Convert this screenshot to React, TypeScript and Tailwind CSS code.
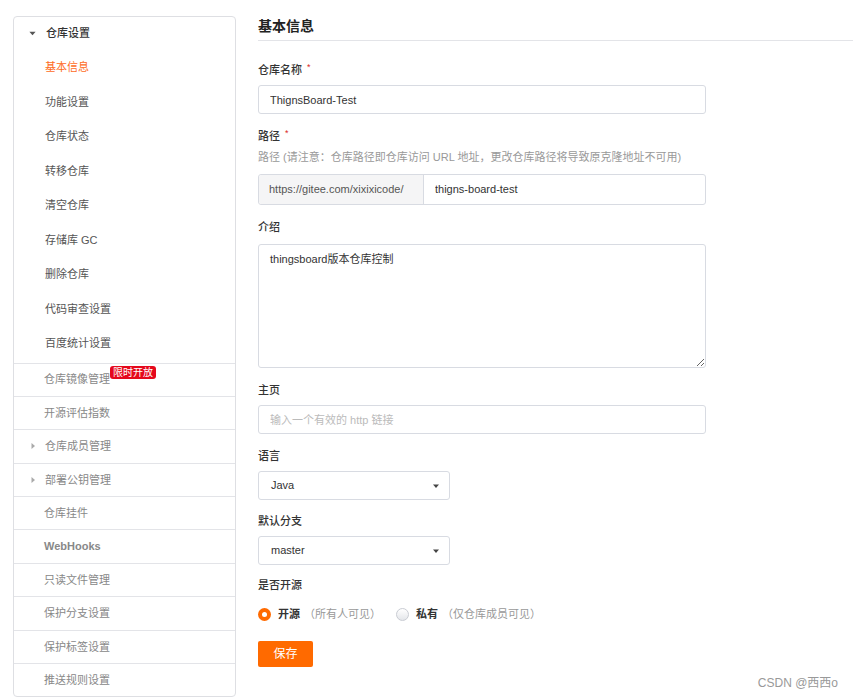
import React from 'react';

const font = { fontFamily: '"Liberation Sans", "Noto Sans CJK SC", sans-serif' };

const groupItems = ['基本信息', '功能设置', '仓库状态', '转移仓库', '清空仓库', '存储库 GC', '删除仓库', '代码审查设置', '百度统计设置'];

const rows: { label: string; caret?: boolean; badge?: string; bold?: boolean }[] = [
  { label: '仓库镜像管理', badge: '限时开放' },
  { label: '开源评估指数' },
  { label: '仓库成员管理', caret: true },
  { label: '部署公钥管理', caret: true },
  { label: '仓库挂件' },
  { label: 'WebHooks', bold: true },
  { label: '只读文件管理' },
  { label: '保护分支设置' },
  { label: '保护标签设置' },
  { label: '推送规则设置' },
];

const Label: React.FC<{ text: string; required?: boolean; className?: string }> = ({ text, required, className }) => (
  <div className={`h-[18px] leading-[18px] text-[11px] font-medium text-[#333] ${className ?? ''}`}>
    {text}
    {required && <span className="text-[#db2828] ml-[5px] relative top-[-4px] text-[9px]">*</span>}
  </div>
);

const Caret = () => (
  <svg width="8" height="8" viewBox="0 0 8 8" className="text-[#444]">
    <path d="M1 2.5h6L4 6z" fill="currentColor" />
  </svg>
);

const Sidebar = () => (
  <div className="w-[223px] shrink-0 border border-[#dedfe3] rounded-[4px] text-[11px]">
    <div className="pb-[2px]">
      <div className="h-[33px] flex items-center pl-[15px]">
        <span className="w-[17px] flex text-[#555]">
          <svg width="7" height="7" viewBox="0 0 8 8">
            <path d="M0.5 2h7L4 6z" fill="#555" />
          </svg>
        </span>
        <span className="font-medium text-[#333]">仓库设置</span>
      </div>
      {groupItems.map((item, i) => (
        <div
          key={item}
          className={`h-[34.5px] flex items-center pl-[31px] ${i === 0 ? 'text-[#fe6b1c]' : 'text-[#555]'}`}
        >
          {item}
        </div>
      ))}
    </div>
    {rows.map((r) => (
      <div
        key={r.label}
        className={`h-[33.4px] border-t border-[#e3e4e8] flex items-center ${r.caret ? 'pl-[16px]' : 'pl-[30px]'} text-[#888]`}
      >
        {r.caret && (
          <span className="w-[15px] flex">
            <svg width="6" height="8" viewBox="0 0 6 8">
              <path d="M1.5 1v6L5 4z" fill="#aaa" />
            </svg>
          </span>
        )}
        <span className={r.bold ? 'font-semibold' : ''}>{r.label}</span>
        {r.badge && (
          <span className="relative top-[-7px] bg-[#e5081c] text-white text-[10px] leading-[13px] px-[3px] rounded-[3px]">
            {r.badge}
          </span>
        )}
      </div>
    ))}
  </div>
);

const Select: React.FC<{ value: string; className?: string }> = ({ value, className }) => (
  <div className={`w-[192px] h-[29px] border border-[#d8dbe2] rounded-[3px] flex items-center justify-between pl-[12px] pr-[9px] text-[11px] text-[#333] ${className ?? ''}`}>
    <span>{value}</span>
    <Caret />
  </div>
);

const Radio: React.FC<{ checked?: boolean }> = ({ checked }) =>
  checked ? (
    <span className="w-[13px] h-[13px] rounded-full bg-[#ff6a00] flex items-center justify-center">
      <span className="w-[5px] h-[5px] rounded-full bg-white" />
    </span>
  ) : (
    <span className="w-[13px] h-[13px] rounded-full border border-[#c9ccd3] bg-gradient-to-b from-white to-[#e4e6ea]" />
  );

export default function App() {
  return (
    <div className="relative min-h-[699px] bg-white" style={font}>
      <div className="flex pt-[16px] pl-[13px]">
        <Sidebar />
        <div className="flex-1 ml-[22px] flex flex-col">
          <div className="h-[25px] leading-[20px] text-[14px] font-semibold text-[#222] border-b border-[#e3e4e8]">
            基本信息
          </div>
          <div className="w-[448px] flex flex-col">
            <Label text="仓库名称" required className="mt-[20px]" />
            <input
              readOnly
              value="ThignsBoard-Test"
              className="mt-[6px] h-[29px] border border-[#d8dbe2] rounded-[3px] px-[11px] text-[11px] text-[#333] outline-none"
            />
            <Label text="路径" required className="mt-[13px]" />
            <div className="mt-[3px] h-[18px] leading-[18px] text-[11px] text-[#999]">
              路径 (请注意：仓库路径即仓库访问 URL 地址，更改仓库路径将导致原克隆地址不可用)
            </div>
            <div className="mt-[8px] h-[31px] border border-[#d8dbe2] rounded-[3px] flex text-[11px]">
              <div className="w-[165px] bg-[#f5f5f6] border-r border-[#d8dbe2] flex items-center pl-[10px] text-[#555] rounded-l-[3px]">
                https://gitee.com/xixixicode/
              </div>
              <input readOnly value="thigns-board-test" className="flex-1 px-[11px] text-[#333] outline-none" />
            </div>
            <Label text="介绍" className="mt-[13px]" />
            <textarea
              readOnly
              defaultValue="thingsboard版本仓库控制"
              className="mt-[8px] h-[124px] border border-[#d8dbe2] rounded-[3px] px-[11px] py-[7px] text-[11px] leading-[14px] text-[#333] outline-none resize-y"
            />
            <Label text="主页" className="mt-[13px]" />
            <input
              readOnly
              placeholder="输入一个有效的 http 链接"
              className="mt-[6px] h-[29px] border border-[#d8dbe2] rounded-[3px] px-[11px] text-[11px] text-[#333] placeholder:text-[#bbb] outline-none"
            />
            <Label text="语言" className="mt-[13px]" />
            <Select value="Java" className="mt-[6px]" />
            <Label text="默认分支" className="mt-[12px]" />
            <Select value="master" className="mt-[6px]" />
            <Label text="是否开源" className="mt-[11px]" />
            <div className="mt-[11px] h-[18px] flex items-center text-[11px]">
              <Radio checked />
              <span className="ml-[7px] font-semibold text-[#333]">开源</span>
              <span className="ml-[4px] text-[#999]">（所有人可见）</span>
              <span className="ml-[15px] flex">
                <Radio />
              </span>
              <span className="ml-[7px] font-semibold text-[#333]">私有</span>
              <span className="ml-[4px] text-[#999]">（仅仓库成员可见）</span>
            </div>
            <button className="mt-[18px] w-[55px] h-[26px] bg-[#ff6a00] text-white text-[12px] rounded-[2px]">
              保存
            </button>
          </div>
        </div>
      </div>
      <div className="absolute right-[15px] bottom-[7px] text-[12px] text-[#999]">CSDN @西西o</div>
    </div>
  );
}
